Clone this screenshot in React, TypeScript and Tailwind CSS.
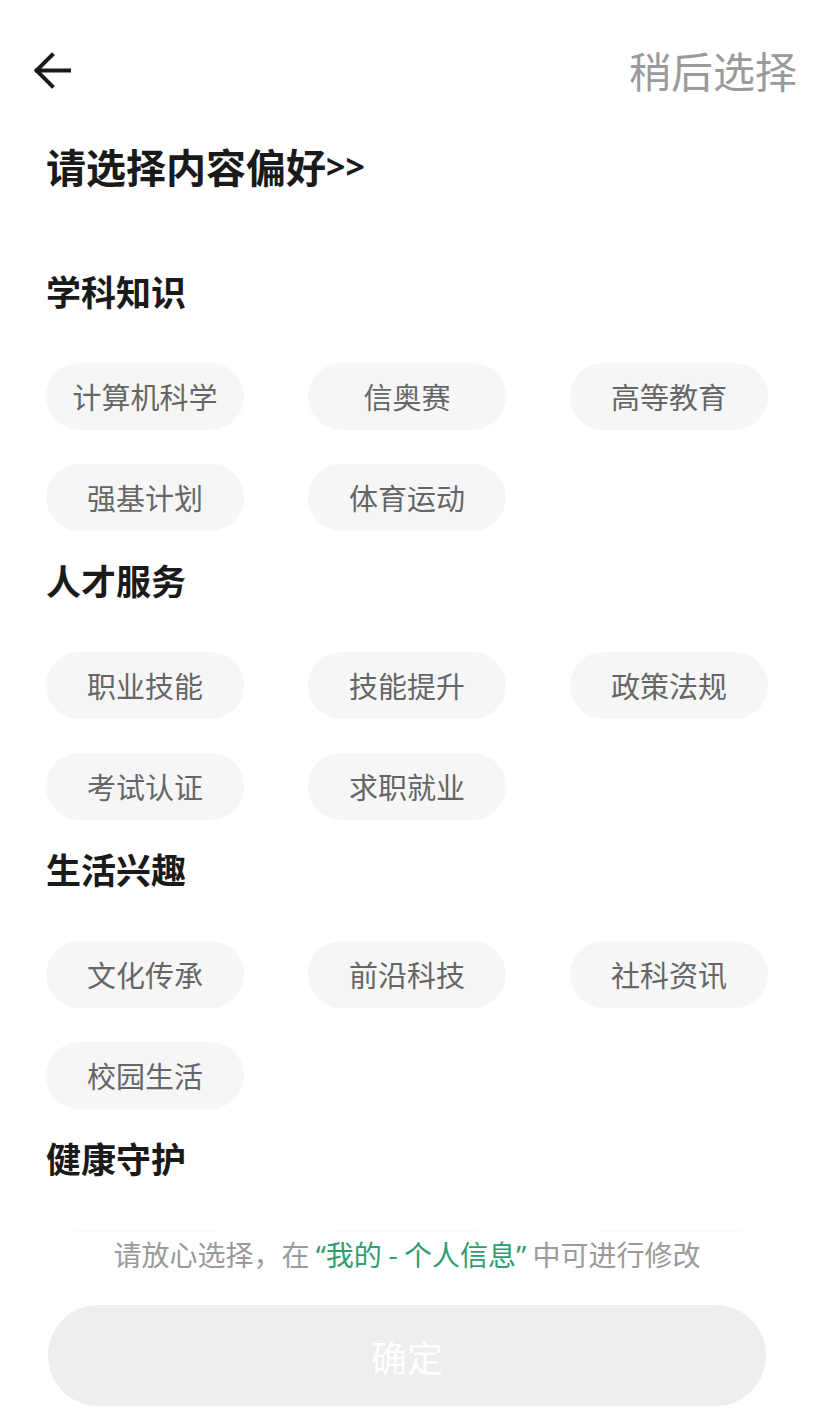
import React from "react"

const sections: { title: string; items: string[] }[] = [
  { title: "学科知识", items: ["计算机科学", "信奥赛", "高等教育", "强基计划", "体育运动"] },
  { title: "人才服务", items: ["职业技能", "技能提升", "政策法规", "考试认证", "求职就业"] },
  { title: "生活兴趣", items: ["文化传承", "前沿科技", "社科资讯", "校园生活"] },
  // these sit under the bottom bar, only their top edges peek out
  { title: "健康守护", items: ["", "", ""] },
]

const font = { fontFamily: '"Noto Sans CJK SC", "Noto Sans", sans-serif' }
const latin = { fontFamily: '"Noto Sans", "Noto Sans CJK SC", sans-serif' }

const Chip = ({ label }: { label: string }) => (
  <div className="h-[67px] rounded-full bg-[#f6f6f6] flex items-center justify-center text-[29px] text-[#666666]">
    {label}
  </div>
)

const App = (): JSX.Element => {
  return (
    <div className="relative h-[1425px] w-[818px] overflow-hidden bg-white" style={font}>
      {/* header */}
      <div className="flex items-center justify-between h-[52px] mt-[44px] pl-[34px] pr-[21px]">
        <svg width="37" height="37" viewBox="0 0 37 37" fill="none" stroke="#1a1a1a" strokeWidth="4" strokeLinecap="square">
          <line x1="3" y1="18.5" x2="35" y2="18.5" />
          <polyline points="18,3 2.5,18.5 18,34" strokeLinejoin="miter" />
        </svg>
        <span className="text-[42px] leading-[52px] text-[#9a9a9a]">稍后选择</span>
      </div>

      <h1 className="mt-[46px] h-[48px] flex items-center pl-[46px] text-[40px] leading-[48px] font-bold text-[#1a1a1a]">
        请选择内容偏好<span style={latin} className="text-[34px]">&gt;&gt;</span>
      </h1>

      <div className="mt-[79px]">
        {sections.map((s, i) => (
          <div key={s.title} className={i === 0 ? "" : "mt-[27px]"}>
            <h2 className="pl-[46px] h-[44px] text-[35px] leading-[44px] font-bold text-[#1a1a1a]">{s.title}</h2>
            <div className="mt-[50px] pl-[46px] grid grid-cols-[198px_198px_198px] gap-x-[64px] gap-y-[34px]">
              {s.items.map((it, j) => (
                <Chip key={s.title + j} label={it} />
              ))}
            </div>
          </div>
        ))}
      </div>

      {/* bottom overlay */}
      <div className="absolute bottom-0 left-0 right-0 h-[194px] flex flex-col">
        <div className="h-[4px] w-full bg-gradient-to-b from-white/60 to-white" />
        <div className="w-full flex-1 bg-white flex flex-col items-center pr-[4px]">
          <p className="-mt-[3px] text-[28px] leading-[44px] text-[#9a9a9a] whitespace-nowrap">
            请放心选择，在{" "}
            <span className="text-[#2e9e70]">
              <span style={latin}>“</span>我的 - 个人信息<span style={latin}>”</span>
            </span>{" "}
            中可进行修改
          </p>
          <button className="mt-[28px] h-[101px] w-[718px] rounded-full bg-[#eeeeee] text-[36px] text-white">
            确定
          </button>
        </div>
      </div>
    </div>
  )
}

export default App
